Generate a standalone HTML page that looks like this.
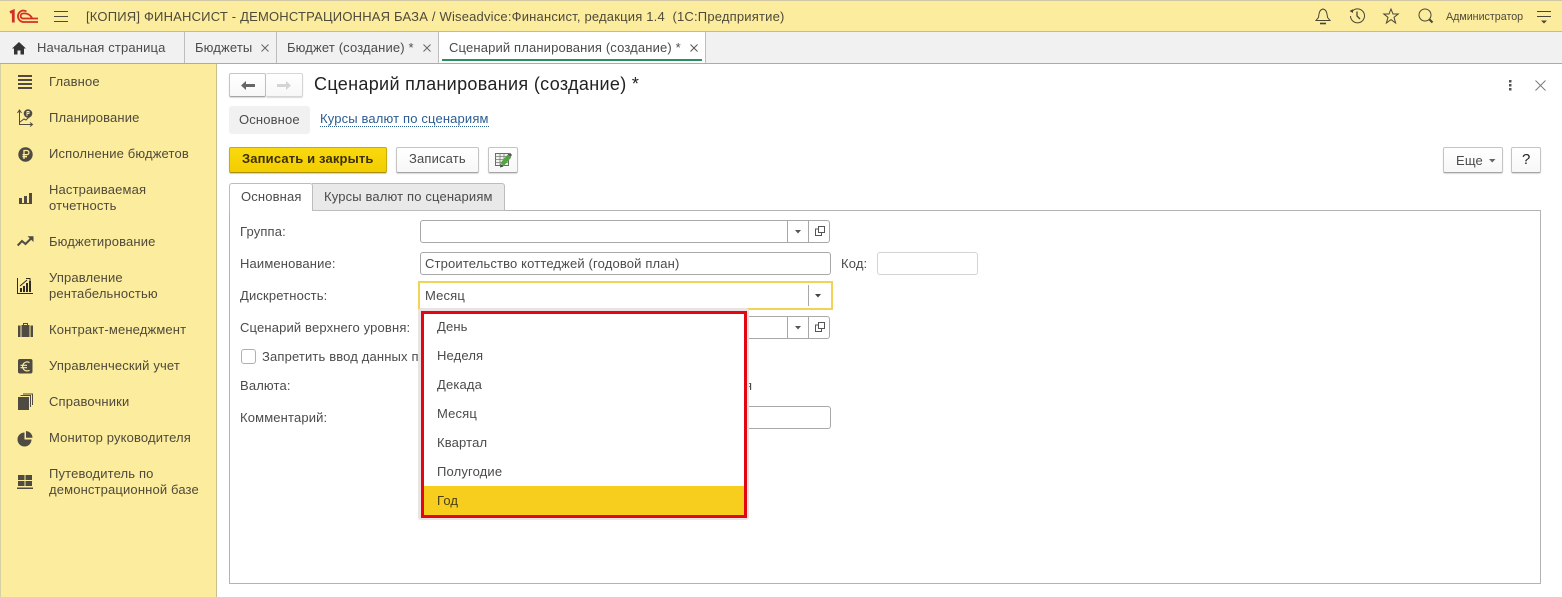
<!DOCTYPE html>
<html lang="ru"><head><meta charset="utf-8"><title>Сценарий планирования</title>
<style>
*{box-sizing:border-box}
html,body{margin:0;padding:0;width:1562px;height:597px;overflow:hidden;background:#fff}
body{position:relative;font-family:"Liberation Sans",Arial,sans-serif;font-size:13px;color:#4b4b4b}
.a{position:absolute}
.t{position:absolute;white-space:nowrap;line-height:16px;letter-spacing:.15px}
.s{color:#4f4a3a}
.f{position:absolute;background:#fff;border:1px solid #a8a8a8;border-radius:3px;height:23px}
.btn{position:absolute;background:linear-gradient(#fff,#f7f7f7);border:1px solid #c4c4c4;border-bottom:1px solid #a5a5a5;border-radius:2px;box-shadow:0 1px 1px rgba(0,0,0,.15)}
svg{position:absolute;overflow:visible}
</style></head><body>

<!-- top bar -->
<div class="a" style="left:0;top:0;width:1562px;height:32px;background:#fbec9e;border-top:1px solid #cfc7a5;border-bottom:1px solid #c6bb8c"></div>
<!-- 1C logo -->
<svg style="left:0;top:0" width="40" height="26" fill="none" stroke="#d42f26">
<path d="M10 12.500 13.300 11V22.500" stroke-width="2.800"/>
<path d="M26.500 11.500C25 10.700 24 10.500 23 10.500A5.800 5.800 0 0 0 23 22H38" stroke-width="1.800"/>
<path d="M23 13.500C20 13.500 19.800 18.500 23 18.500H38M23 13.500C27 13 30 14.500 32 18" stroke-width="1.800"/>
</svg>
<svg style="left:54px;top:11px" width="15" height="11" stroke="#4f4a3a" stroke-width="1.100"><path d="M0 .5H14M0 5.500H14M0 10.500H14"/></svg>
<div class="t s" style="left:86px;top:9px;letter-spacing:.19px">[КОПИЯ] ФИНАНСИСТ - ДЕМОНСТРАЦИОННАЯ БАЗА / Wiseadvice:Финансист, редакция 1.4&nbsp; (1С:Предприятие)</div>
<!-- bell -->
<svg style="left:1315px;top:8px" width="16" height="17" fill="none" stroke="#4a4636" stroke-width="1"><path d="M1 12.500H15L12.600 9.500C12 7.500 12.500 2 8 1 3.500 2 4 7.500 3.400 9.500Z"/><path d="M5 15.500H11" stroke-width="1.600"/></svg>
<!-- history -->
<svg style="left:1349px;top:8px" width="17" height="16" fill="none" stroke="#4a4636" stroke-width="1"><path d="M3 3.500A7 7 0 1 1 1.500 8"/><path d="M.5 3 4 1.200 4 5Z" fill="#4a4636" stroke="none"/><path d="M8 3.500V8L11 11" stroke-width="1.300"/></svg>
<!-- star -->
<svg style="left:1383px;top:8px" width="16" height="16" fill="none" stroke="#4a4636" stroke-width="1"><path d="M8 1 10 6H15.200L11 9.300 12.600 15 8 11.600 3.400 15 5 9.300 .8 6H6Z"/></svg>
<!-- search -->
<svg style="left:1418px;top:8px" width="16" height="16" fill="none" stroke="#4a4636" stroke-width="1"><circle cx="7" cy="7" r="6"/><path d="M11.500 11.500 14.500 14.500" stroke-width="2"/></svg>
<div class="t s" style="left:1446px;top:9px;font-size:10.700px;letter-spacing:0">Администратор</div>
<svg style="left:1537px;top:10px" width="15" height="15" fill="#4a4636"><path d="M0 1H14V2H0ZM0 6H14V7H0Z"/><path d="M4 10.500H10L7 13.500Z"/></svg>

<!-- tabs bar -->
<div class="a" style="left:0;top:32px;width:1562px;height:32px;background:#f2f1f1;border-bottom:1px solid #ababab"></div>
<div class="a" style="left:184px;top:32px;width:1px;height:31px;background:#bdbdbd"></div>
<div class="a" style="left:276px;top:32px;width:1px;height:31px;background:#bdbdbd"></div>
<div class="a" style="left:438px;top:32px;width:268px;height:31px;background:#fff;border-left:1px solid #bdbdbd;border-right:1px solid #bdbdbd"></div>
<div class="a" style="left:442px;top:59px;width:260px;height:2px;background:#2a8f5f"></div>
<svg style="left:12px;top:42px" width="14" height="13" fill="#333"><path d="M7 0 14 6.500H12V12.500H8.500V8.500H5.500V12.500H2V6.500H0Z"/></svg>
<div class="t" style="left:37px;top:40px">Начальная страница</div>
<div class="t" style="left:195px;top:40px">Бюджеты</div>
<div class="t" style="left:287px;top:40px">Бюджет (создание) *</div>
<div class="t" style="left:449px;top:40px">Сценарий планирования (создание) *</div>
<svg style="left:261px;top:44px" width="8" height="8" stroke="#666" stroke-width="1"><path d="M.5 .5 7.500 7.500M7.500 .5 .5 7.500"/></svg>
<svg style="left:423px;top:44px" width="8" height="8" stroke="#666" stroke-width="1"><path d="M.5 .5 7.500 7.500M7.500 .5 .5 7.500"/></svg>
<svg style="left:690px;top:44px" width="8" height="8" stroke="#555" stroke-width="1"><path d="M.5 .5 7.500 7.500M7.500 .5 .5 7.500"/></svg>

<!-- sidebar -->
<div class="a" style="left:0;top:64px;width:217px;height:533px;background:#fbec9e;border-right:1px solid #c9c08f;border-left:1px solid #d8d0a5"></div>
<div class="t s" style="left:49px;top:74px">Главное</div>
<div class="t s" style="left:49px;top:110px">Планирование</div>
<div class="t s" style="left:49px;top:146px">Исполнение бюджетов</div>
<div class="t s" style="left:49px;top:182px">Настраиваемая</div>
<div class="t s" style="left:49px;top:198px">отчетность</div>
<div class="t s" style="left:49px;top:234px">Бюджетирование</div>
<div class="t s" style="left:49px;top:270px">Управление</div>
<div class="t s" style="left:49px;top:286px">рентабельностью</div>
<div class="t s" style="left:49px;top:322px">Контракт-менеджмент</div>
<div class="t s" style="left:49px;top:358px">Управленческий учет</div>
<div class="t s" style="left:49px;top:394px">Справочники</div>
<div class="t s" style="left:49px;top:430px">Монитор руководителя</div>
<div class="t s" style="left:49px;top:466px">Путеводитель по</div>
<div class="t s" style="left:49px;top:482px">демонстрационной базе</div>

<!-- sidebar icons -->
<svg style="left:18px;top:75px" width="15" height="14" fill="#4f4b42"><path d="M0 0H14V2H0ZM0 4H14V6H0ZM0 8H14V10H0ZM0 12H14V14H0Z"/></svg>
<svg style="left:17px;top:109px" width="17" height="17" fill="none" stroke="#4f4b42" stroke-width="1"><path d="M2.500 2V15.500H15"/><path d="M.5 4 2.500 1 4.500 4M13 13.500 15.500 15.500 13 17.500" /><path d="M3 13 7 10 9 11 12 8"/><circle cx="11" cy="4.500" r="4.300" fill="#4f4b42" stroke="none"/><path d="M10 7V2.500H12V4.500H9.500" stroke="#fbec9e" stroke-width=".9"/></svg>
<svg style="left:18px;top:147px" width="15" height="15"><circle cx="7.500" cy="7.500" r="7.200" fill="#4f4b42"/><path d="M6 12V3.500H8.800A2 2 0 0 1 8.800 7.700H4.500M4.500 9.700H9" fill="none" stroke="#fbec9e" stroke-width="1.300"/></svg>
<svg style="left:19px;top:193px" width="13" height="11" fill="#4f4b42"><path d="M0 5H3V10H0ZM5 3H8V10H5ZM10 0H13V10H10ZM0 10H13V11H0Z"/></svg>
<svg style="left:17px;top:236px" width="17" height="11" fill="none" stroke="#4f4b42" stroke-width="2"><path d="M.7 9.500 5 5 8.500 8 14.500 2"/><path d="M10.500 .2H16.500V6Z" fill="#4f4b42" stroke="none"/></svg>
<svg style="left:17px;top:277px" width="16" height="17" fill="#2f2b20"><path d="M0 1H1V16H16V17H0Z"/><path d="M3 11H5V15H3ZM6 9H8V15H6ZM9 6H11V15H9ZM12 4H14V15H12Z"/><path d="M3 9 10 3 M9 1.500H13V5" stroke="#2f2b20" fill="none" stroke-width="1"/></svg>
<svg style="left:18px;top:323px" width="15" height="14" fill="#4f4b42"><path d="M5 0H10V2H11.500V14H3.500V2H5ZM6 1V2H9V1Z"/><path d="M0 2.500H2.500V14H0ZM12.500 2.500H15V14H12.500Z"/></svg>
<svg style="left:18px;top:359px" width="15" height="15"><rect width="14.500" height="14.500" rx="2" fill="#4f4b42"/><path d="M11.500 3.600A4.500 4.500 0 1 0 11.500 11.200M2.500 6.300H9M2.500 8.700H9" fill="none" stroke="#fbec9e" stroke-width="1.200"/></svg>
<svg style="left:18px;top:394px" width="15" height="16" fill="#4f4b42"><path d="M0 3H11V16H0Z"/><path d="M2.500 1.500H12.500V13M5 0H14.500V11" fill="none" stroke="#4f4b42" stroke-width="1"/></svg>
<svg style="left:18px;top:431px" width="15" height="15" fill="#4f4b42"><path d="M6.500 1.500V8.500H13.500A7 7 0 1 1 6.500 1.500Z"/><path d="M8 0A7 7 0 0 1 14.500 6.800H8Z"/></svg>
<svg style="left:17px;top:475px" width="16" height="14" fill="#4f4b42"><path d="M1 0H7.500V5H1ZM8.500 0H15V5H8.500ZM1 6H7.500V11H1ZM8.500 6H15V11H8.500ZM0 12.500H16V14H0Z"/></svg>

<!-- header -->
<div class="btn" style="left:229px;top:73px;width:37px;height:24px;border-color:#c4c4c4;border-bottom-color:#a5a5a5"></div>
<div class="btn" style="left:266px;top:73px;width:37px;height:24px;border-left:0;border-color:#d6d6d6"></div>
<svg style="left:241px;top:81px" width="14" height="9" fill="#666"><path d="M0 4.500 5 0V3H14V6H5V9Z"/></svg>
<svg style="left:277px;top:81px" width="14" height="9" fill="#d4d4d4"><path d="M14 4.500 9 0V3H0V6H9V9Z"/></svg>
<div class="t" style="left:314px;top:74px;font-size:18px;line-height:21px;color:#222;letter-spacing:.33px">Сценарий планирования (создание) *</div>
<svg style="left:1509px;top:80px" width="3" height="11" fill="#555"><rect width="2.500" height="2.500"/><rect y="4" width="2.500" height="2.500"/><rect y="8" width="2.500" height="2.500"/></svg>
<svg style="left:1535px;top:80px" width="11" height="11" stroke="#777" stroke-width=".9"><path d="M.5 .5 10.500 10.500M10.500 .5 .5 10.500"/></svg>

<div class="a" style="left:229px;top:106px;width:81px;height:28px;background:#f1f1f1;border-radius:3px"></div>
<div class="t" style="left:239px;top:112px">Основное</div>
<div class="t" style="left:320px;top:112px;color:#2b5d92;border-bottom:1px dotted #2b5d92;line-height:14px;height:15px">Курсы валют по сценариям</div>

<!-- command bar -->
<div class="a" style="left:229px;top:147px;width:158px;height:26px;background:linear-gradient(#f9d90f,#f3cd00);border:1px solid #c9ab0a;border-bottom-color:#a98f10;border-radius:2px;box-shadow:0 1px 1px rgba(0,0,0,.2)"></div>
<div class="t" style="left:242px;top:151px;color:#3c3000;font-weight:bold">Записать и закрыть</div>
<div class="btn" style="left:396px;top:147px;width:83px;height:26px"></div>
<div class="t" style="left:409px;top:151px">Записать</div>
<div class="btn" style="left:488px;top:147px;width:30px;height:26px"></div>
<svg style="left:495px;top:152px" width="17" height="16"><rect x=".5" y="1.500" width="13" height="12" fill="#f2f2ee" stroke="#6b6b6b"/><path d="M.5 4.500H13.500M.5 7.500H13.500M.5 10.500H13.500M5 1.500V13.500M9 1.500V13.500" stroke="#7a7a7a" stroke-width=".8" fill="none"/><path d="M7 12.500 14.500 4" stroke="#4fa83f" stroke-width="4.500" fill="none"/><path d="M13 2.500 15 .8 17 3 15.500 5Z" fill="#555"/><path d="M5 15.500 5.600 12 8.500 14.500Z" fill="#444"/></svg>
<div class="btn" style="left:1443px;top:147px;width:60px;height:26px"></div>
<div class="t" style="left:1456px;top:153px">Еще</div>
<svg style="left:1489px;top:159px" width="7" height="4" fill="#666"><path d="M0 0H6.500L3.250 3.500Z"/></svg>
<div class="btn" style="left:1511px;top:147px;width:30px;height:26px"></div>
<div class="t" style="left:1522px;top:152px;color:#222;font-size:15px">?</div>

<!-- tab panel -->
<div class="a" style="left:229px;top:210px;width:1312px;height:374px;border:1px solid #b4b4b4;background:#fff"></div>
<div class="a" style="left:312px;top:183px;width:193px;height:28px;background:#e9e9e9;border:1px solid #bcbcbc;border-left:0;border-radius:0 3px 0 0"></div>
<div class="a" style="left:229px;top:183px;width:84px;height:28px;background:#fff;border:1px solid #bcbcbc;border-bottom:0;border-radius:3px 3px 0 0"></div>
<div class="t" style="left:241px;top:189px">Основная</div>
<div class="t" style="left:324px;top:189px">Курсы валют по сценариям</div>

<!-- form -->
<div class="t" style="left:240px;top:224px">Группа:</div>
<div class="t" style="left:240px;top:256px">Наименование:</div>
<div class="t" style="left:240px;top:288px">Дискретность:</div>
<div class="t" style="left:240px;top:320px">Сценарий верхнего уровня:</div>
<div class="a" style="left:241px;top:349px;width:15px;height:15px;border:1px solid #b0b0b0;border-radius:3px;background:#fff"></div>
<div class="t" style="left:262px;top:349px">Запретить ввод данных п</div>
<div class="t" style="left:240px;top:378px">Валюта:</div>
<div class="t" style="left:240px;top:410px">Комментарий:</div>

<div class="f" style="left:420px;top:220px;width:410px"></div>
<div class="a" style="left:787px;top:221px;width:1px;height:21px;background:#a8a8a8"></div>
<div class="a" style="left:808px;top:221px;width:1px;height:21px;background:#a8a8a8"></div>
<svg style="left:795px;top:230px" width="6" height="4" fill="#555"><path d="M0 0H6L3 3.500Z"/></svg>
<svg style="left:815px;top:226px" width="10" height="10" fill="none" stroke="#555"><path d="M3.500 .5H9.500V6.500H3.500ZM3 3H.5V9.500H6.500V7"/></svg>

<div class="f" style="left:420px;top:252px;width:411px"></div>
<div class="t" style="left:425px;top:256px">Строительство коттеджей (годовой план)</div>
<div class="t" style="left:841px;top:256px">Код:</div>
<div class="f" style="left:877px;top:252px;width:101px;border-color:#d4d4d4"></div>

<div class="a" style="left:418px;top:281px;width:415px;height:29px;border:2px solid #f2d257;background:#fff"></div>
<div class="t" style="left:425px;top:288px">Месяц</div>
<div class="a" style="left:808px;top:285px;width:1px;height:21px;background:#a8a8a8"></div>
<svg style="left:815px;top:294px" width="6" height="4" fill="#444"><path d="M0 0H6L3 3.500Z"/></svg>

<div class="f" style="left:700px;top:316px;width:130px"></div>
<div class="a" style="left:787px;top:317px;width:1px;height:21px;background:#a8a8a8"></div>
<div class="a" style="left:808px;top:317px;width:1px;height:21px;background:#a8a8a8"></div>
<svg style="left:795px;top:326px" width="6" height="4" fill="#555"><path d="M0 0H6L3 3.500Z"/></svg>
<svg style="left:815px;top:322px" width="10" height="10" fill="none" stroke="#555"><path d="M3.500 .5H9.500V6.500H3.500ZM3 3H.5V9.500H6.500V7"/></svg>
<div class="t" style="left:745px;top:378px">я</div>
<div class="f" style="left:700px;top:406px;width:131px"></div>

<!-- dropdown -->
<div class="a" style="left:418px;top:308px;width:331px;height:212px;background:#e9e3e3;border-radius:3px"></div>
<div class="a" style="left:421px;top:311px;width:326px;height:207px;background:#fff;border:3px solid #e30613"></div>
<div class="a" style="left:424px;top:486px;width:320px;height:29px;background:#f7cd1e"></div>
<div class="t" style="left:437px;top:319px">День</div>
<div class="t" style="left:437px;top:348px">Неделя</div>
<div class="t" style="left:437px;top:377px">Декада</div>
<div class="t" style="left:437px;top:406px">Месяц</div>
<div class="t" style="left:437px;top:435px">Квартал</div>
<div class="t" style="left:437px;top:464px">Полугодие</div>
<div class="t" style="left:437px;top:493px;color:#4a3f10">Год</div>

</body></html>
